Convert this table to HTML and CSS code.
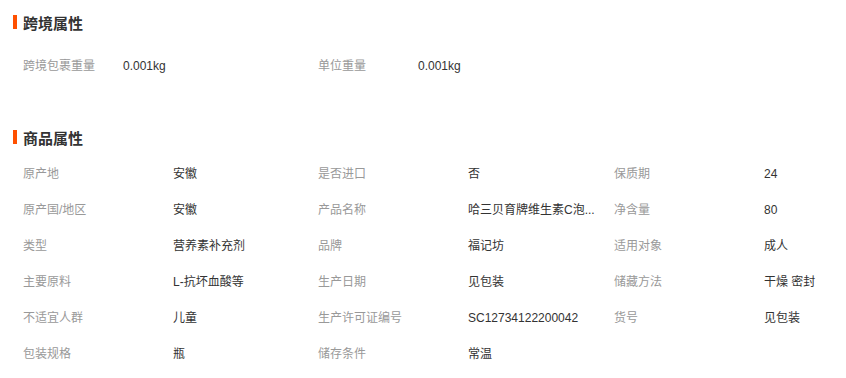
FILE: index.html
```html
<!DOCTYPE html>
<html lang="zh-CN">
<head>
<meta charset="utf-8">
<title>属性</title>
<link rel="stylesheet" href="styles.css">
</head>
<body>
<section class="block block-first">
  <h3 class="title">跨境属性</h3>
  <ul class="attrs attrs-cross">
    <li class="attr"><span class="label">跨境包裹重量</span><span class="value">0.001kg</span></li>
    <li class="attr"><span class="label">单位重量</span><span class="value">0.001kg</span></li>
  </ul>
</section>
<section class="block block-second">
  <h3 class="title">商品属性</h3>
  <ul class="attrs">
    <li class="attr"><span class="label">原产地</span><span class="value">安徽</span></li>
    <li class="attr"><span class="label">是否进口</span><span class="value">否</span></li>
    <li class="attr"><span class="label">保质期</span><span class="value">24</span></li>
    <li class="attr"><span class="label">原产国/地区</span><span class="value">安徽</span></li>
    <li class="attr"><span class="label">产品名称</span><span class="value" title="哈三贝育牌维生素C泡腾片">哈三贝育牌维生素C泡...</span></li>
    <li class="attr"><span class="label">净含量</span><span class="value">80</span></li>
    <li class="attr"><span class="label">类型</span><span class="value">营养素补充剂</span></li>
    <li class="attr"><span class="label">品牌</span><span class="value">福记坊</span></li>
    <li class="attr"><span class="label">适用对象</span><span class="value">成人</span></li>
    <li class="attr"><span class="label">主要原料</span><span class="value">L-抗坏血酸等</span></li>
    <li class="attr"><span class="label">生产日期</span><span class="value">见包装</span></li>
    <li class="attr"><span class="label">储藏方法</span><span class="value">干燥 密封</span></li>
    <li class="attr"><span class="label">不适宜人群</span><span class="value">儿童</span></li>
    <li class="attr"><span class="label">生产许可证编号</span><span class="value">SC12734122200042</span></li>
    <li class="attr"><span class="label">货号</span><span class="value">见包装</span></li>
    <li class="attr"><span class="label">包装规格</span><span class="value">瓶</span></li>
    <li class="attr"><span class="label">储存条件</span><span class="value">常温</span></li>
  </ul>
</section>
</body>
</html>
```
FILE: styles.css
```css
html, body {
  margin: 0;
  padding: 0;
  background: #fff;
  overflow: hidden;
}
body {
  font-family: "Liberation Sans", "Noto Sans CJK SC", sans-serif;
  font-size: 12px;
  color: #333;
  width: 846px;
}
.block {
  padding-left: 13px;
}
.block-first {
  padding-top: 13px;
}
.block-second {
  margin-top: 44px;
}
.title {
  margin: 0;
  display: flex;
  align-items: center;
  height: 18px;
  font-size: 15px;
  font-weight: bold;
  color: #333;
  font-family: "Noto Sans CJK SC", sans-serif;
}
.title::before {
  content: "";
  display: block;
  width: 4px;
  height: 14px;
  background: #ff5000;
  margin-right: 6px;
}
.attrs {
  list-style: none;
  margin: 10px 0 0 10px;
  padding: 0;
  display: grid;
  grid-template-columns: 295px 296px 240px;
}
.attrs-cross {
  margin-top: 17px;
}
.attr {
  display: flex;
  height: 36px;
  align-items: center;
  min-width: 0;
}
.label,
.value {
  display: block;
  height: 18px;
  line-height: 18px;
}
.label {
  flex: 0 0 150px;
  color: #999;
}
.attrs-cross .label {
  flex-basis: 100px;
}
.value {
  width: 135px;
  color: #333;
  white-space: nowrap;
}
```
